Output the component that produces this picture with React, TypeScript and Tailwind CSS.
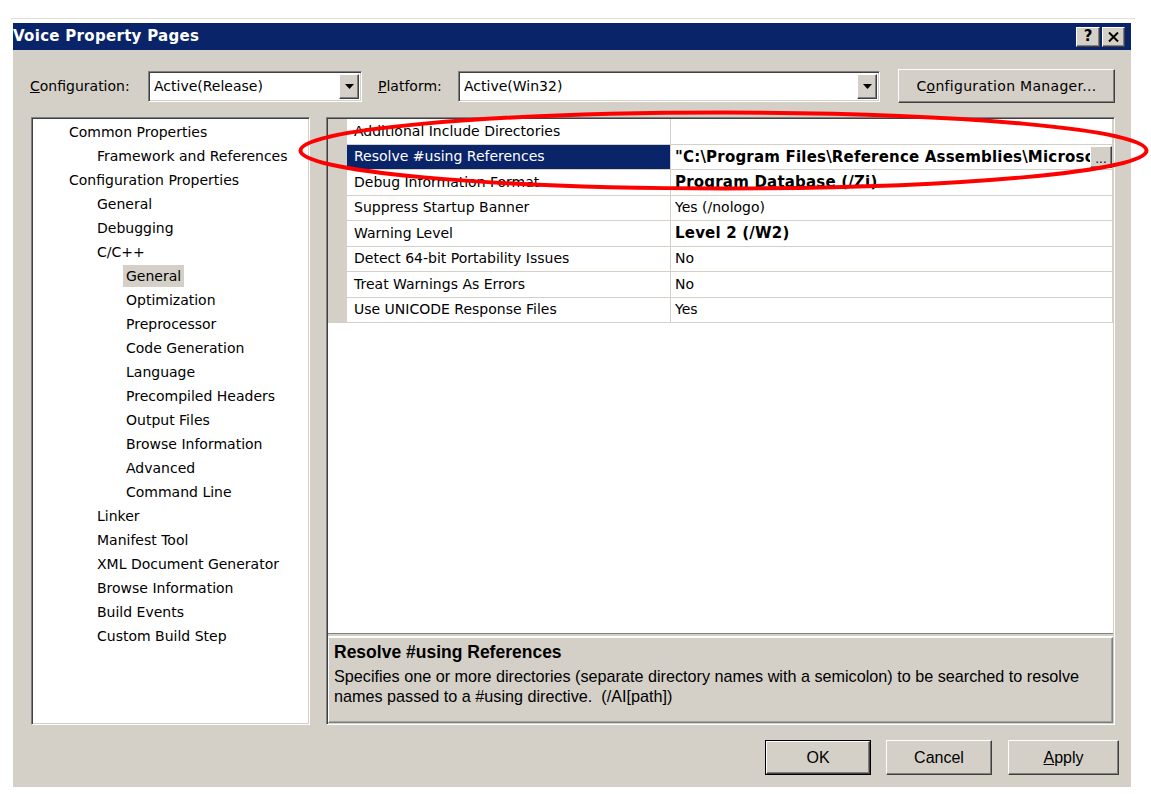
import React from 'react';

const treeItems: { label: string; level: number; selected?: boolean }[] = [
  { label: 'Common Properties', level: 0 },
  { label: 'Framework and References', level: 1 },
  { label: 'Configuration Properties', level: 0 },
  { label: 'General', level: 1 },
  { label: 'Debugging', level: 1 },
  { label: 'C/C++', level: 1 },
  { label: 'General', level: 2, selected: true },
  { label: 'Optimization', level: 2 },
  { label: 'Preprocessor', level: 2 },
  { label: 'Code Generation', level: 2 },
  { label: 'Language', level: 2 },
  { label: 'Precompiled Headers', level: 2 },
  { label: 'Output Files', level: 2 },
  { label: 'Browse Information', level: 2 },
  { label: 'Advanced', level: 2 },
  { label: 'Command Line', level: 2 },
  { label: 'Linker', level: 1 },
  { label: 'Manifest Tool', level: 1 },
  { label: 'XML Document Generator', level: 1 },
  { label: 'Browse Information', level: 1 },
  { label: 'Build Events', level: 1 },
  { label: 'Custom Build Step', level: 1 },
];

const rows: { name: string; value: string; bold?: boolean; selected?: boolean }[] = [
  { name: 'Additional Include Directories', value: '' },
  { name: 'Resolve #using References', value: '"C:\\Program Files\\Reference Assemblies\\Microsoft\\Framework\\v3.0"', bold: true, selected: true },
  { name: 'Debug Information Format', value: 'Program Database (/Zi)', bold: true },
  { name: 'Suppress Startup Banner', value: 'Yes (/nologo)' },
  { name: 'Warning Level', value: 'Level 2 (/W2)', bold: true },
  { name: 'Detect 64-bit Portability Issues', value: 'No' },
  { name: 'Treat Warnings As Errors', value: 'No' },
  { name: 'Use UNICODE Response Files', value: 'Yes' },
];

const raised =
  'border border-t-white border-l-white border-r-[#404040] border-b-[#404040] shadow-[inset_-1px_-1px_0_#808080] bg-[#d4d0c8]';
const sunken =
  'border border-t-[#808080] border-l-[#808080] border-r-white border-b-white shadow-[inset_1px_1px_0_#404040,inset_-1px_-1px_0_#d4d0c8]';

const Combo = ({ text, width }: { text: string; width: string }) => (
  <div className={`${sunken} ${width} h-[31px] bg-white flex items-center p-[2px]`}>
    <span className="flex-1 pl-[3px] text-[14px] text-black">{text}</span>
    <div className={`${raised} w-[20px] h-[25px] flex items-center justify-center`}>
      <svg width="9" height="5" viewBox="0 0 9 5">
        <path d="M0 0h9L4.5 5z" fill="#000" />
      </svg>
    </div>
  </div>
);

export default function App() {
  return (
    <div className="w-[1151px] h-[794px] bg-white relative overflow-hidden font-['DejaVu_Sans',sans-serif] text-black">
      <div className="pt-[18px] pl-[11px]">
        <div className="h-px w-[1124px] bg-[#dedede]" />
      </div>

      <div className="mt-[4px] ml-[13px] w-[1118px] flex flex-col">
        {/* Title bar */}
        <div className="h-[27px] bg-[#0a246a] flex items-center justify-between pr-[6px]">
          <span className="text-white font-bold text-[15px] tracking-[0.3px]">Voice Property Pages</span>
          <div className="flex gap-[2px]">
            <div className={`${raised} w-[24px] h-[20px] flex items-center justify-center font-bold text-[15px] leading-none`}>?</div>
            <div className={`${raised} w-[23px] h-[20px] flex items-center justify-center`}>
              <svg width="11" height="10" viewBox="0 0 11 10">
                <path d="M1 0.5L10 9.5M10 0.5L1 9.5" stroke="#000" strokeWidth="2" />
              </svg>
            </div>
          </div>
        </div>

        {/* Body */}
        <div className="bg-[#d4d0c8] h-[737px] flex flex-col pl-[17px] pr-[12px]">
          {/* Configuration row */}
          <div className="mt-[19px] h-[34px] flex items-center">
            <span className="w-[118px] text-[14px]">
              <span className="underline">C</span>onfiguration:
            </span>
            <Combo text="Active(Release)" width="w-[214px]" />
            <span className="ml-[16px] w-[80px] text-[14px]">
              <span className="underline">P</span>latform:
            </span>
            <Combo text="Active(Win32)" width="w-[422px]" />
            <div className={`${raised} ml-[18px] w-[217px] h-[34px] flex items-center justify-center text-[14px] tracking-[0.3px]`}>
              C<span className="underline">o</span>nfiguration Manager...
            </div>
          </div>

          {/* Main area */}
          <div className="mt-[14px] h-[608px] flex">
            {/* Tree */}
            <div className={`${sunken} ml-[1px] w-[279px] h-full bg-white p-[2px] flex flex-col`}>
              {treeItems.map((item, i) => (
                <div key={i} className="h-[24px] flex items-center">
                  <span
                    className={`text-[14px] px-[3px] leading-[22px] ${item.selected ? 'bg-[#d4d0c8]' : ''} ${
                      item.level === 0 ? 'ml-[32px]' : item.level === 1 ? 'ml-[60px]' : 'ml-[89px]'
                    }`}
                  >
                    {item.label}
                  </span>
                </div>
              ))}
            </div>

            {/* Property grid */}
            <div className={`${sunken} ml-[16px] w-[789px] h-full p-[1px] flex flex-col bg-[#d4d0c8]`}>
              <div className="h-[514px] bg-white flex flex-col">
                {rows.map((row, i) => (
                  <div key={i} className="h-[25.5px] flex">
                    <div className="w-[19px] bg-[#d4d0c8]" />
                    <div
                      className={`w-[324px] border-r border-b border-[#d4d0c8] pl-[7px] flex items-center text-[14px] whitespace-nowrap overflow-hidden ${
                        row.selected ? 'bg-[#0a246a] text-white' : ''
                      }`}
                    >
                      {row.name}
                    </div>
                    <div className="flex-1 min-w-0 border-r border-b border-[#d4d0c8] pl-[4px] flex items-center">
                      <span
                        className={`flex-1 min-w-0 overflow-hidden whitespace-nowrap ${
                          row.bold ? 'font-bold text-[15px] tracking-[0.2px]' : 'text-[14px]'
                        }`}
                      >
                        {row.value}
                      </span>
                      {row.selected && (
                        <div className={`${raised} w-[22px] h-[22px] flex items-end justify-center text-[12px] leading-[16px] shrink-0`}>
                          ...
                        </div>
                      )}
                    </div>
                  </div>
                ))}
              </div>
              <div className="h-[4px] border-t border-[#808080] border-b border-b-white" />
              <div className="h-[86px] border border-[#808080] border-t-white border-l-white shadow-[inset_-1px_-1px_0_#a0a0a0] pl-[5px] pt-[4px] font-['Liberation_Sans',sans-serif]">
                <div className="font-bold text-[17.5px] leading-[20px]">Resolve #using References</div>
                <div className="mt-[4px] text-[16.2px] leading-[20px]">
                  Specifies one or more directories (separate directory names with a semicolon) to be searched to resolve
                  <br />
                  names passed to a #using directive.&nbsp; (/AI[path])
                </div>
              </div>
            </div>
          </div>

          {/* Buttons */}
          <div className="mt-[15px] h-[35px] flex justify-end font-['Liberation_Sans',sans-serif] text-[16px]">
            <div className="w-[106px] h-[35px] border border-black flex">
              <div className={`${raised} flex-1 flex items-center justify-center`}>OK</div>
            </div>
            <div className={`${raised} ml-[15px] w-[106px] h-[35px] flex items-center justify-center`}>Cancel</div>
            <div className={`${raised} ml-[16px] w-[111px] h-[35px] flex items-center justify-center`}>
              <span className="underline">A</span>pply
            </div>
          </div>
        </div>
      </div>

      {/* Red annotation ellipse */}
      <svg className="absolute inset-0 pointer-events-none" width="1151" height="794">
        <ellipse cx="723.5" cy="150.5" rx="423" ry="38" fill="none" stroke="#ff0000" strokeWidth="4" />
      </svg>
    </div>
  );
}
